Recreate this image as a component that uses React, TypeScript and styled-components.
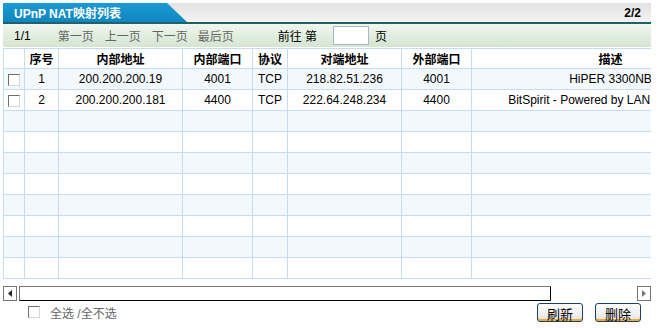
import React from 'react';
import styled, { createGlobalStyle } from 'styled-components';

interface MappingRow {
    id: string,
    inAddr: string,
    inPort: string,
    proto: string,
    peerAddr: string,
    outPort: string,
    desc: string
}

const GlobalStyle = createGlobalStyle`
    body {
        margin: 0;
        background: #fff;
        font-family: "Liberation Sans", "Noto Sans CJK SC", sans-serif;
        font-size: 12px;
        color: #000;
    }
`

const Panel = styled.div`
    width: 648px;
    margin: 3px 0 0 3px;
`

const TitleBar = styled.div`
    display: flex;
    align-items: center;
    height: 19px;
    border-bottom: 2px solid #22606c;
    background: linear-gradient(#e2e2e2, #f4f4f4);
`

const Tab = styled.div`
    width: 184px;
    height: 100%;
    display: flex;
    align-items: center;
    padding-left: 11px;
    box-sizing: border-box;
    clip-path: polygon(0 0, 164px 0, 100% 100%, 0 100%);
    background: linear-gradient(#1b9ad3, #0f86c0);
    color: #fff;
    font-weight: bold;
    font-size: 12px;
`

const PageCount = styled.div`
    margin-left: auto;
    padding-right: 10px;
    font-weight: bold;
`

const Toolbar = styled.div`
    display: flex;
    align-items: center;
    height: 23px;
    padding-left: 11px;
    background: linear-gradient(#f1f7ef, #d3e5d0);
`

const NavText = styled.span<{ $gap: number, $muted?: boolean }>`
    margin-right: ${p => p.$gap}px;
    color: ${p => p.$muted ? '#666' : '#000'};
`

const PageInput = styled.span`
    width: 34px;
    height: 17px;
    margin: 0 6px 0 16px;
    background: #fff;
    border: 1px solid #a8b8c8;
`

const Viewport = styled.div`
    width: 648px;
    overflow: hidden;
    margin-top: 1px;
`

const Table = styled.table`
    width: 747px;
    border-collapse: collapse;
    table-layout: fixed;
    border: 1px solid #c4dcf6;
`

const HeadCell = styled.th<{ $w: number }>`
    width: ${p => p.$w - 1}px;
    height: 19px;
    padding: 0;
    border: 1px solid #c4dcf6;
    font-weight: bold;
    font-size: 12px;
    text-align: center;
`

const Row = styled.tr<{ $alt: boolean }>`
    background: ${p => p.$alt ? '#f3f8fd' : '#fff'};
`

const Cell = styled.td`
    height: 20px;
    padding: 0;
    border: 1px solid #c4dcf6;
    text-align: center;
    white-space: nowrap;
    overflow: hidden;
`

const CheckBox = styled.span`
    display: inline-block;
    width: 10px;
    height: 10px;
    background: #fff;
    border: 1px solid;
    border-color: #6e6e6e #d6d6d6 #d6d6d6 #6e6e6e;
    vertical-align: middle;
`

const ScrollBar = styled.div`
    display: flex;
    align-items: center;
    height: 15px;
    margin-top: 7px;
`

const ArrowBtn = styled.div`
    width: 12px;
    height: 13px;
    display: flex;
    align-items: center;
    justify-content: center;
    border: 1px solid #777;
    background: #fff;
`

const Thumb = styled.div`
    width: 530px;
    height: 13px;
    margin-left: 2px;
    border: 1px solid;
    border-color: #777 #000 #000 #777;
    background: #fff;
`

const Spacer = styled.div`
    flex: 1;
`

const Footer = styled.div`
    display: flex;
    align-items: center;
    height: 22px;
    padding-left: 25px;
    padding-right: 10px;
`

const FooterLabel = styled.span`
    margin-left: 10px;
    color: #666;
`

const Button = styled.button`
    width: 46px;
    height: 19px;
    margin-left: 12px;
    padding: 0 0 2px;
    border: 1px solid #1d3f6c;
    border-radius: 3px;
    background: linear-gradient(#ffffff, #e4e4e4);
    box-shadow: inset 0 -2px 0 #f1a935;
    font-family: "Noto Sans CJK SC", sans-serif;
    font-size: 13px;
    color: #000;
    &:first-of-type { margin-left: auto; }
`

const columns = [
    { label: '', w: 21 },
    { label: '序号', w: 34 },
    { label: '内部地址', w: 124 },
    { label: '内部端口', w: 70 },
    { label: '协议', w: 35 },
    { label: '对端地址', w: 114 },
    { label: '外部端口', w: 70 },
    { label: '描述', w: 278 }
]

const rows: MappingRow[] = [
    { id: '1', inAddr: '200.200.200.19', inPort: '4001', proto: 'TCP', peerAddr: '218.82.51.236', outPort: '4001', desc: 'HiPER 3300NB' },
    { id: '2', inAddr: '200.200.200.181', inPort: '4400', proto: 'TCP', peerAddr: '222.64.248.234', outPort: '4400', desc: 'BitSpirit - Powered by LANSpirit (TCP)' }
]

const Arrow: React.FC<{ dir: 'left' | 'right' }> = ({ dir }) => (
    <svg width="4" height="7" viewBox="0 0 4 7">
        <path d={dir === 'left' ? 'M4 0L0 3.5L4 7Z' : 'M0 0L4 3.5L0 7Z'} fill={dir === 'left' ? '#222' : '#777'} />
    </svg>
)

const App: React.FC = () => {
    const body = Array.from({ length: 10 }, (_, i) => rows[i])
    return (
        <Panel>
            <GlobalStyle />
            <TitleBar>
                <Tab>UPnP NAT映射列表</Tab>
                <PageCount>2/2</PageCount>
            </TitleBar>
            <Toolbar>
                <NavText $gap={27}>1/1</NavText>
                <NavText $gap={11} $muted>第一页</NavText>
                <NavText $gap={11} $muted>上一页</NavText>
                <NavText $gap={10} $muted>下一页</NavText>
                <NavText $gap={44} $muted>最后页</NavText>
                <NavText $gap={0}>前往 第</NavText>
                <PageInput />
                <NavText $gap={0}>页</NavText>
            </Toolbar>
            <Viewport>
                <Table>
                    <thead>
                        <tr>
                            {columns.map((c, i) => <HeadCell key={i} $w={c.w}>{c.label}</HeadCell>)}
                        </tr>
                    </thead>
                    <tbody>
                        {body.map((r, i) => (
                            <Row key={i} $alt={i % 2 === 0}>
                                <Cell>{r && <CheckBox />}</Cell>
                                <Cell>{r?.id}</Cell>
                                <Cell>{r?.inAddr}</Cell>
                                <Cell>{r?.inPort}</Cell>
                                <Cell>{r?.proto}</Cell>
                                <Cell>{r?.peerAddr}</Cell>
                                <Cell>{r?.outPort}</Cell>
                                <Cell>{r?.desc}</Cell>
                            </Row>
                        ))}
                    </tbody>
                </Table>
            </Viewport>
            <ScrollBar>
                <ArrowBtn><Arrow dir="left" /></ArrowBtn>
                <Thumb />
                <Spacer />
                <ArrowBtn><Arrow dir="right" /></ArrowBtn>
            </ScrollBar>
            <Footer>
                <CheckBox />
                <FooterLabel>全选 /全不选</FooterLabel>
                <Button>刷新</Button>
                <Button>删除</Button>
            </Footer>
        </Panel>
    )
}

export default App;
